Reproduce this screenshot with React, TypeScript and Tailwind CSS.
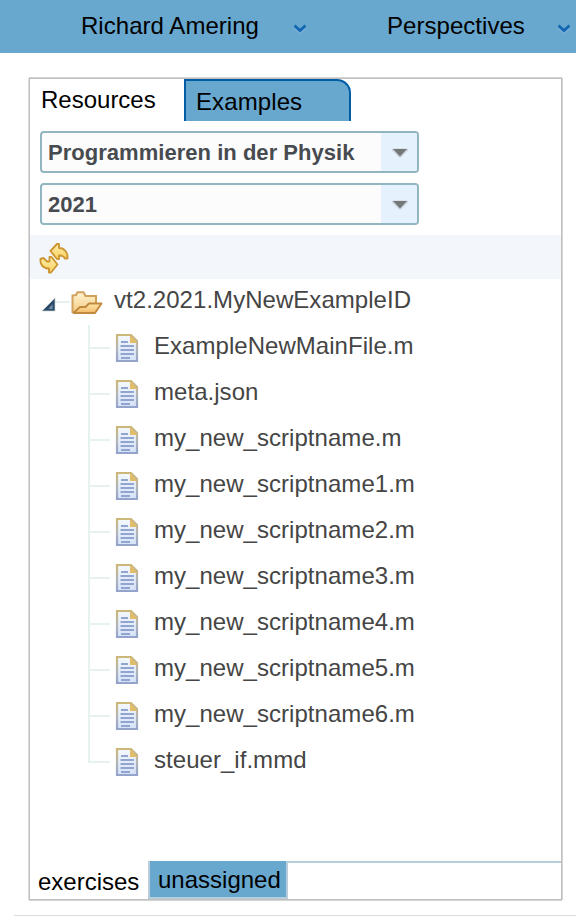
import React from 'react';

const files = [
  'ExampleNewMainFile.m',
  'meta.json',
  'my_new_scriptname.m',
  'my_new_scriptname1.m',
  'my_new_scriptname2.m',
  'my_new_scriptname3.m',
  'my_new_scriptname4.m',
  'my_new_scriptname5.m',
  'my_new_scriptname6.m',
  'steuer_if.mmd',
];

function MenuChevron() {
  return (
    <svg width="16" height="12" viewBox="0 0 16 12" className="shrink-0">
      <path d="M1 2h4l3 3 3-3h4v3l-6 6H7L1 6z" fill="#86b5da" opacity=".5" />
      <path d="M2.500 2.500l5.500 5 5.500-5" fill="none" stroke="#1467b3" strokeWidth="3" />
    </svg>
  );
}

function SelectBox({ label }: { label: string }) {
  return (
    <div className="flex h-[42px] w-[379px] overflow-hidden rounded-[4px] border-2 border-[#92b6c1] bg-[#fcfcfc]">
      <span className="flex-1 pl-[6px] text-[22px] leading-[40px] font-bold tracking-[0.03px] whitespace-nowrap text-[#474b50]">{label}</span>
      <span className="flex w-9 items-center justify-center bg-[#e5f2fd] pt-[2px] pl-[2px]">
        <svg width="16" height="10" viewBox="0 0 16 10">
          <path d="M0 .5h16v2L9 9.500H7L0 2.500z" fill="#c3cbd0" opacity=".7" />
          <path d="M1 1h14L8 8.500z" fill="#747778" />
        </svg>
      </span>
    </div>
  );
}

function RefreshIcon() {
  return (
    <svg width="30" height="32" viewBox="0 0 30 32">
      <defs>
        <linearGradient id="gold" x1="0" y1="0" x2="0" y2="1">
          <stop offset="0" stopColor="#fff0ac" />
          <stop offset="1" stopColor="#f9d05f" />
        </linearGradient>
      </defs>
      <g fill="url(#gold)" stroke="#cd9733" strokeWidth="1.9" strokeLinejoin="round">
        <path d="M11.500 9L18 2h2v4c5 0 9 4 8.500 10.500h-2.500c-1-2-3-3-6-3V17h-2z" />
        <path d="M1.500 17l3-1 3.500 3.500h2.500L10.500 15h2l6 7.500-6.500 8h-2V26.500C4.500 26.500.8 23 1.500 17z" />
      </g>
    </svg>
  );
}

function FolderIcon() {
  return (
    <svg width="32" height="26" viewBox="0 0 32 26" className="shrink-0">
      <defs>
        <linearGradient id="folderBack" x1="0" y1="0" x2="0" y2="1">
          <stop offset="0" stopColor="#fff3d2" />
          <stop offset="1" stopColor="#f5cd83" />
        </linearGradient>
        <linearGradient id="folderFront" x1="0" y1="0" x2="0" y2="1">
          <stop offset="0" stopColor="#ffe9ac" />
          <stop offset="1" stopColor="#f2b968" />
        </linearGradient>
      </defs>
      <path d="M1.500 23V6.500L5 6l1.500-2.800h6L14.500 7H25v7l-8 9z" fill="url(#folderBack)" stroke="#d2a15c" strokeWidth="2" />
      <path d="M2.500 24L9 18h5.500l3.500-3.500h12.500L24 24z" fill="url(#folderFront)" stroke="#c1883f" strokeWidth="1.9" strokeLinejoin="round" />
    </svg>
  );
}

function FileIcon() {
  return (
    <svg width="24" height="30" viewBox="0 0 24 30" className="shrink-0">
      <defs>
        <linearGradient id="edge" x1="0" y1="0" x2="0" y2="1">
          <stop offset="0" stopColor="#cdb778" />
          <stop offset=".55" stopColor="#b0b5b8" />
          <stop offset="1" stopColor="#93a3cb" />
        </linearGradient>
        <linearGradient id="paper" x1="0" y1="0" x2="0" y2="1">
          <stop offset="0" stopColor="#f4f8fb" />
          <stop offset="1" stopColor="#d5e2f7" />
        </linearGradient>
      </defs>
      <path d="M2 2h14l6 6v20H2z" fill="url(#paper)" stroke="url(#edge)" strokeWidth="2.200" />
      <path d="M15 2l7 7v1h-7z" fill="#e0bc6b" />
      <path d="M6 9h7M5.500 13h13.500M5.500 17h13.500M5.500 21h13.500M6 25h9" stroke="#91a5d0" strokeWidth="2.100" />
    </svg>
  );
}

export default function App() {
  return (
    <div className="flex h-[916px] w-[576px] flex-col overflow-hidden bg-white font-['Liberation_Sans',Arial,sans-serif] text-2xl text-black">
      <header className="flex h-[53px] shrink-0 bg-[#68a7ce] leading-[51px] tracking-[0.04px]">
        <div className="flex h-[51px] w-[387px] items-center pl-[81px]">
          <span className="w-[211px] whitespace-nowrap">Richard Amering</span>
          <span className="pt-[6px]"><MenuChevron /></span>
        </div>
        <div className="flex h-[51px] items-center">
          <span className="w-[169px]">Perspectives</span>
          <span className="pt-[6px]"><MenuChevron /></span>
        </div>
      </header>

      <main className="mt-[25px] ml-[29px] flex h-[822px] w-[533px] shrink-0 flex-col border border-[#bfbfbf] shadow-[0_-1px_0_#d4d4d4,0_1px_0_#d4d4d4,-1px_0_0_#dcdcdc,1px_0_0_#d4d4d4]">
        <div className="flex h-[42px] shrink-0">
          <div className="w-[154px] pl-[11px] leading-[42px]">Resources</div>
          <div className="w-[167px] rounded-tr-[14px] border-t-2 border-r-2 border-l-2 border-[#005ca5] bg-[#68a7ce] pl-[10px] leading-[42px] tracking-[0.1px]">Examples</div>
        </div>
        <div className="flex shrink-0 flex-col gap-[10px] pt-[10px] pb-[10px] pl-[10px]">
          <SelectBox label="Programmieren in der Physik" />
          <SelectBox label="2021" />
        </div>
        <div className="h-[44px] shrink-0 bg-[#f3f7fc] pt-[7px] pl-[9px]">
          <RefreshIcon />
        </div>

        <div className="flex-1 tracking-[0.04px] text-[#454545]">
          <div className="flex h-[46px] items-center">
            <svg width="41" height="24" viewBox="0 0 41 24" className="shrink-0">
              <path d="M25 12h15" stroke="#e5f2ef" strokeWidth="2" />
              <path d="M12 21L25 8v13z" fill="#2b4a68" stroke="#cbd1d5" strokeWidth=".7" />
              <path d="M18.500 19l4-5v5z" fill="#7890a5" />
            </svg>
            <FolderIcon />
            <span className="pb-[4px] pl-[11px]">vt2.2021.MyNewExampleID</span>
          </div>
          {files.map((name, i) => (
            <div key={name} className="flex h-[46px]">
              <svg width="80" height="46" viewBox="0 0 80 46" className="shrink-0">
                <path d={i === files.length - 1 ? 'M59 0v23h21' : 'M59 0v46M59 23h21'} fill="none" stroke="#e5f2ef" strokeWidth="2" />
              </svg>
              <span className="pt-[8px] pl-[5px]"><FileIcon /></span>
              <span className="pl-[15px] leading-[42px]">{name}</span>
            </div>
          ))}
        </div>

        <footer className="flex h-[38px] shrink-0">
          <div className="w-[118px] pl-[8px] leading-[41px]">exercises</div>
          <div className="w-[140px] border-x-2 border-b-2 border-[#b8cddc] bg-[#68a7ce] pl-[8px] leading-[38px]">unassigned</div>
          <div className="flex-1 border-t-2 border-[#b8cddc]" />
        </footer>
      </main>
      <div className="mt-[15px] ml-[14px] h-px shrink-0 bg-[#dcdcdc]" />
    </div>
  );
}
